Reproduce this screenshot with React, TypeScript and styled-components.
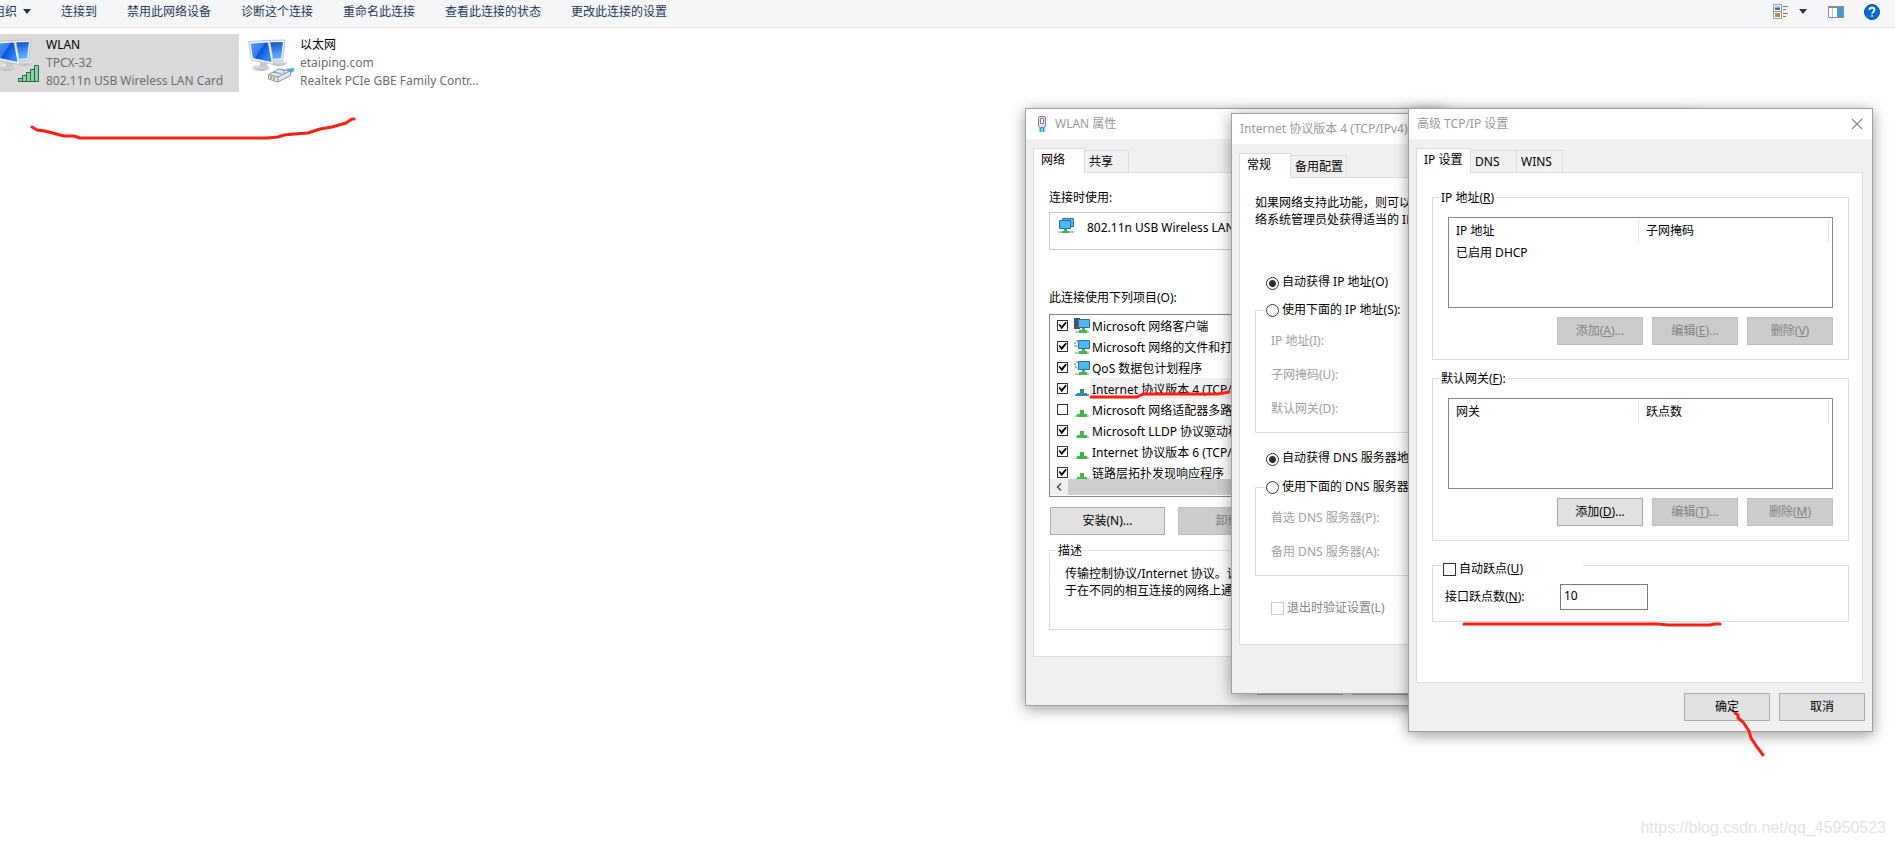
import React from 'react';
import styled, { createGlobalStyle, css } from 'styled-components';

const Global = createGlobalStyle`
  *, *::before, *::after { box-sizing: border-box; }
  body { margin: 0; background: #fff; color: #000; overflow: hidden;
    font: 12px/16px "Noto Sans", "Noto Sans CJK SC", sans-serif; }
  button, input, table { font: inherit; color: inherit; }
`;

const Desktop = styled.main`
  position: relative;
  min-height: 100vh;
  overflow: hidden;
`;

/* ---------- Explorer ---------- */
const Toolbar = styled.header`
  display: flex;
  align-items: center;
  justify-content: space-between;
  height: 28px;
  padding: 0 15px 4px 0;
  background: #f5f6f7;
  border-bottom: 1px solid #e5e6e7;
`;
const Commands = styled.nav`
  display: flex;
  gap: 30px;
  margin-left: -7px;
`;
const Command = styled.button`
  display: flex;
  align-items: center;
  gap: 6px;
  padding: 0;
  border: 0;
  background: none;
  color: #1e395b;
  white-space: nowrap;
`;
const ViewTools = styled.div`
  display: flex;
  align-items: center;
`;
const ToolButton = styled.button<{ $gap?: number }>`
  display: flex;
  padding: 0;
  border: 0;
  background: none;
  margin-left: ${(p) => p.$gap ?? 0}px;
`;
const Connections = styled.section`
  display: flex;
  gap: 1px;
  margin: 6px 0 0 -14px;
`;
const Connection = styled.article<{ $selected?: boolean }>`
  display: flex;
  gap: 4px;
  width: 253px;
  height: 58px;
  padding: 2px 4px 2px 8px;
  background: ${(p) => (p.$selected ? '#d9d9d9' : 'transparent')};
`;
const ConnectionIcon = styled.svg`
  flex: none;
`;
const ConnectionText = styled.div`
  min-width: 0;
  color: #6d6d6d;
  line-height: 18px;
  white-space: nowrap;
`;
const ConnectionName = styled.div`
  color: #000;
`;
const Ellipsis = styled.div`
  overflow: hidden;
  text-overflow: ellipsis;
`;
const Watermark = styled.div`
  position: absolute;
  right: 9px;
  bottom: 8px;
  color: #e2e2e2;
  font: 16px/20px "Liberation Sans", sans-serif;
`;

/* ---------- Dialogs ---------- */
const Dialog = styled.section<{ $right: number; $top: number; $width: number }>`
  position: absolute;
  right: ${(p) => p.$right}px;
  top: ${(p) => p.$top}px;
  width: ${(p) => p.$width}px;
  background: #f0f0f0;
  border: 1px solid #a0a0a0;
  box-shadow: 0 3px 14px rgba(0, 0, 0, 0.4);
  white-space: nowrap;
`;
const TitleBar = styled.header`
  display: flex;
  align-items: center;
  gap: 5px;
  height: 30px;
  padding: 0 9px 0 8px;
  background: #fff;
  color: #999;
`;
const Title = styled.h2`
  margin: 0;
  font: inherit;
  flex: 1;
`;
const CloseButton = styled.button`
  display: flex;
  padding: 0;
  border: 0;
  background: none;
`;
const Tabs = styled.div`
  display: flex;
  align-items: flex-end;
  height: 33px;
  padding-left: 7px;
`;
const Tab = styled.button<{ $width: number; $active?: boolean }>`
  width: ${(p) => p.$width}px;
  height: 22px;
  padding: 0 0 0 4px;
  text-align: left;
  background: #f0f0f0;
  border: 1px solid #dcdcdc;
  border-width: 1px 1px 0 0;
  ${(p) =>
    p.$active &&
    css`
      position: relative;
      z-index: 1;
      height: 25px;
      margin-bottom: -1px;
      padding: 0 0 2px 7px;
      background: #fff;
      border-left-width: 1px;
    `}
`;
const Panel = styled.div<{ $bottom: number }>`
  margin: 0 9px 0 7px;
  padding: 16px 13px ${(p) => p.$bottom}px 15px;
  background: #fff;
  border: 1px solid #dcdcdc;
`;
const Footer = styled.footer`
  display: flex;
  justify-content: flex-end;
  gap: 9px;
  min-height: 48px;
  padding: 10px 7px;
`;
const Button = styled.button<{ $width?: number }>`
  width: ${(p) => p.$width ?? 86}px;
  height: 28px;
  padding: 0;
  background: #e1e1e1;
  border: 1px solid #adadad;
  &:disabled {
    background: #ccc;
    border-color: #bfbfbf;
    color: #838383;
  }
`;
const Group = styled.fieldset<{ $mt?: number }>`
  min-width: 0;
  margin: ${(p) => p.$mt ?? 0}px 0 0;
  padding: 0;
  border: 1px solid #dcdcdc;
`;
const Legend = styled.legend`
  height: 16px;
  margin-left: 6px;
  padding: 0 2px;
  line-height: 18px;
`;
const OptionLegend = styled.legend`
  width: 180px;
  margin-left: 10px;
  padding: 0;
`;
const MetricLegend = styled.legend`
  width: 140px;
  margin-left: 10px;
  padding: 8px 0 0;
`;
const Option = styled.label<{ $mt?: number; $dim?: boolean; $centered?: boolean }>`
  display: flex;
  align-items: ${(p) => (p.$centered ? 'center' : 'flex-end')};
  gap: 3px;
  height: 16px;
  margin-top: ${(p) => p.$mt ?? 0}px;
  color: ${(p) => (p.$dim ? '#838383' : '#000')};
`;
const OptionIndent = styled.div`
  padding-left: 11px;
`;
const ExitIndent = styled.div`
  padding-left: 16px;
`;
const Radio = styled.input.attrs({ type: 'radio' })`
  appearance: none;
  flex: none;
  width: 13px;
  height: 13px;
  margin: 0;
  border: 1px solid #333;
  border-radius: 50%;
  background: #fff;
  &:checked {
    background: radial-gradient(circle, #333 3px, #fff 4px);
  }
`;
const Check = styled.input.attrs({ type: 'checkbox' })<{ $size: number }>`
  appearance: none;
  flex: none;
  width: ${(p) => p.$size}px;
  height: ${(p) => p.$size}px;
  margin: 0;
  border: 1px solid #333;
  background: #fff;
  &:disabled { border-color: #ccc; }
  &:checked::after {
    content: "";
    display: block;
    width: 9px;
    height: 9px;
    background: #000;
    clip-path: polygon(6% 42%, 20% 34%, 40% 56%, 84% 8%, 98% 20%, 42% 92%);
  }
`;

/* WLAN properties */
const AdapterLabel = styled.div`
  line-height: 18px;
`;
const AdapterBox = styled.div`
  display: flex;
  gap: 13px;
  height: 38px;
  margin-top: 5px;
  padding: 5px 8px;
  border: 1px solid #c8c8c8;
  line-height: 20px;
`;
const ItemsLabel = styled.div`
  margin: 40px 0 8px;
`;
const ItemsBox = styled.div`
  height: 183px;
  border: 1px solid #828790;
`;
const ItemRows = styled.div`
  height: 164px;
  overflow: hidden;
`;
const ItemRow = styled.label`
  display: flex;
  align-items: center;
  height: 21px;
  padding-left: 7px;
`;
const ItemIcon = styled.svg`
  flex: none;
  margin-left: 6px;
`;
const ItemName = styled.span<{ $selected?: boolean }>`
  flex: 1;
  height: 21px;
  padding-left: 2px;
  line-height: 23px;
  background: ${(p) => (p.$selected ? '#f0f0f0' : 'transparent')};
`;
const ScrollBar = styled.div`
  display: flex;
  height: 16px;
  background: #cdcdcd;
`;
const ScrollArrow = styled.button`
  display: flex;
  align-items: center;
  justify-content: center;
  width: 18px;
  padding: 0;
  border: 0;
  background: #f0f0f0;
`;
const InstallRow = styled.div`
  display: flex;
  gap: 13px;
  margin: 10px 0 7px 1px;
`;
const Description = styled.p`
  height: 71px;
  margin: 0;
  padding: 7px 15px 0;
  line-height: 17px;
  overflow: hidden;
`;

/* IPv4 */
const Intro = styled.p`
  margin: 0;
  line-height: 17px;
`;
const FieldNames = styled.div`
  display: grid;
  gap: 18px;
  padding: 15px;
  color: #a0a0a0;
`;

/* Advanced */
const ListBox = styled.div`
  height: 91px;
  margin: 12px 15px 9px;
  padding: 1px 3px 0 0;
  border: 1px solid #828790;
`;
const Table = styled.table`
  width: 100%;
  table-layout: fixed;
  border-collapse: separate;
  border-spacing: 0;
  text-align: left;
  th, td { padding: 0 0 0 7px; font-weight: normal; }
  th { height: 24px; border-right: 1px solid #e5e5e5; }
  td { height: 20px; }
`;
const ListButtons = styled.div`
  display: flex;
  justify-content: flex-end;
  gap: 9px;
  padding: 0 15px 14px;
`;
const MetricRow = styled.div`
  display: flex;
  align-items: center;
  padding: 7px 0 11px 12px;
`;
const MetricLabel = styled.label`
  width: 115px;
`;
const MetricInput = styled.input`
  width: 88px;
  height: 26px;
  padding: 0 3px 3px;
  border: 1px solid #7a7a7a;
  background: #fff;
`;

/* Hand-drawn red marks that lie over the windows */
const Mark = styled.svg<{ $left: number; $top: number }>`
  position: absolute;
  z-index: 2;
  left: ${(p) => p.$left}px;
  top: ${(p) => p.$top}px;
  fill: none;
  stroke: #fe1f12;
  stroke-width: 3;
  stroke-linecap: round;
  stroke-linejoin: round;
  pointer-events: none;
`;

const Caret = () => (
  <svg width="8" height="5" viewBox="0 0 8 5"><path d="M0 0h8L4 5z" fill="#1e395b" /></svg>
);

function Monitors({ kind }: { kind: 'wifi' | 'lan' }) {
  return (
    <ConnectionIcon width="48" height="48" viewBox="0 0 48 48">
      <defs>
        <linearGradient id={`front-${kind}`} x1="0" y1="0" x2="1" y2="0.6">
          <stop offset="0" stopColor="#5a9cf5" />
          <stop offset="0.5" stopColor="#2f7df0" />
          <stop offset="0.52" stopColor="#0a50dc" />
          <stop offset="1" stopColor="#2b8cff" />
        </linearGradient>
        <linearGradient id={`back-${kind}`} x1="0" y1="0" x2="0.3" y2="1">
          <stop offset="0" stopColor="#0a46cc" />
          <stop offset="1" stopColor="#56b0ff" />
        </linearGradient>
        <linearGradient id={`base-${kind}`} x1="0" y1="0" x2="0" y2="1">
          <stop offset="0" stopColor="#f4f4f4" />
          <stop offset="1" stopColor="#b4b6b8" />
        </linearGradient>
      </defs>
      <ellipse cx="31" cy="27" rx="8" ry="3" fill={`url(#base-${kind})`} />
      <path d="M15 4.500L37 4l-2.500 20.500L20 25z" fill="#f2f4f6" stroke="#bfc3c8" />
      <path d="M17 6.500L35 6l-2 16.500L21 23z" fill={`url(#back-${kind})`} />
      <ellipse cx="13" cy="31.500" rx="8.500" ry="3.500" fill={`url(#base-${kind})`} />
      <path d="M12 26h7v5h-7z" fill="#c6c9cc" />
      <path d="M.5 5.500l21-1 4.500 24L3.500 24z" fill="#f7f8f9" stroke="#bfc3c8" />
      <path d="M2.500 7.500l17.500-1 3.500 19.500L5 22z" fill={`url(#front-${kind})`} />
      {kind === 'wifi' ? (
        <path
          d="M24.500 42.500h4v3h-4zM28.500 39.500h4v6h-4zM32.500 36.500h4v9h-4zM36.500 33.500h4v12h-4zM40.500 29.500h4v16h-4z"
          fill="#8fd0a4" stroke="#1f6b3c"
        />
      ) : (
        <g>
          <path d="M38 33l8-1v3l-6 4z" fill="#3fb0e6" />
          <path d="M20.500 38.500L31 33l11.500 2v4.500L30 46l-9.500-3z" fill="#e2e9f3" stroke="#8494ac" />
          <path d="M20.500 38.500L30 41v5M30 41l12-6M32 33l4 1.500v4M25 36l9 2" fill="none" stroke="#8494ac" />
          <path d="M23 40v3.500M26 41v3.500" stroke="#a8a040" strokeWidth="1.500" />
        </g>
      )}
    </ConnectionIcon>
  );
}

type ItemKind = 'client' | 'service' | 'protocol';

function NetIcon({ kind, selected }: { kind: ItemKind; selected?: boolean }) {
  if (kind === 'protocol') {
    return (
      <ItemIcon width="16" height="16" viewBox="0 0 16 16">
        <path d="M1 13h14v2H1z" fill={selected ? '#5a93c8' : '#c8ccc8'} />
        <path d="M6 8h4v4h3v3H3v-3h3z" fill={selected ? '#2b8f98' : '#3dbb4a'} />
      </ItemIcon>
    );
  }
  return (
    <ItemIcon width="16" height="16" viewBox="0 0 16 16">
      {kind === 'client' ? (
        <path d="M0 0h6v11H0z" fill="#4a4f55" />
      ) : (
        <circle cx="4" cy="5" r="3" fill="none" stroke="#9aa0a8" strokeWidth="2" strokeDasharray="2 1" />
      )}
      <path d="M4.500 1.500h11v8h-11z" fill="#4cb8f5" stroke="#2c6f9e" />
      <path d="M1 13h14v2H1z" fill="#c0c4c0" />
      <path d="M8 10h3v2h2v3H5v-3h3z" fill="#3dbb4a" />
    </ItemIcon>
  );
}

const items: { name: string; kind: ItemKind; checked: boolean; selected?: boolean }[] = [
  { name: 'Microsoft 网络客户端', kind: 'client', checked: true },
  { name: 'Microsoft 网络的文件和打印', kind: 'service', checked: true },
  { name: 'QoS 数据包计划程序', kind: 'service', checked: true },
  { name: 'Internet 协议版本 4 (TCP/IPv4)', kind: 'protocol', checked: true, selected: true },
  { name: 'Microsoft 网络适配器多路', kind: 'protocol', checked: false },
  { name: 'Microsoft LLDP 协议驱动程序', kind: 'protocol', checked: true },
  { name: 'Internet 协议版本 6 (TCP/IPv6)', kind: 'protocol', checked: true },
  { name: '链路层拓扑发现响应程序', kind: 'protocol', checked: true },
];

const commands = ['连接到', '禁用此网络设备', '诊断这个连接', '重命名此连接', '查看此连接的状态', '更改此连接的设置'];

function Explorer() {
  return (
    <>
      <Toolbar>
        <Commands>
          <Command>组织<Caret /></Command>
          {commands.map((c) => <Command key={c}>{c}</Command>)}
        </Commands>
        <ViewTools>
          <ToolButton aria-label="视图">
            <svg width="16" height="16" viewBox="0 0 16 16">
              <path d="M.5.5h8v7h-8zM.5 7.500h8v7h-8z" fill="#fff" stroke="#9a9a9a" />
              <path d="M2 2h5v4H2z" fill="#8db9ec" /><path d="M2 4h5v2H2z" fill="#3a6ea5" />
              <path d="M2 9h5v4H2z" fill="#7fb24a" /><path d="M4 10h3v3H4z" fill="#d07a3a" />
              <path d="M10 2.500h5M10 5.500h3M10 9.500h5M10 12.500h3" stroke="#777" />
            </svg>
          </ToolButton>
          <ToolButton $gap={10} aria-label="更多视图"><Caret /></ToolButton>
          <ToolButton $gap={21} aria-label="预览窗格">
            <svg width="16" height="12" viewBox="0 0 16 12">
              <path d="M.5.5h15v11H.5z" fill="#fff" stroke="#8a8a8a" />
              <path d="M0 0h16v2H0z" fill="#8a8a8a" />
              <path d="M4.500 2v9" stroke="#c8c8c8" />
              <path d="M9 2h6v9H9z" fill="#3c9be6" />
            </svg>
          </ToolButton>
          <ToolButton $gap={20} aria-label="帮助">
            <svg width="16" height="16" viewBox="0 0 16 16">
              <circle cx="8" cy="8" r="7.500" fill="#0a6cd0" stroke="#0a4f9e" />
              <path d="M5.500 6c0-3.300 5-3.300 5 0 0 1.800-2.400 1.900-2.400 3.800M8.100 11.200v1.600" fill="none" stroke="#fff" strokeWidth="1.700" />
            </svg>
          </ToolButton>
        </ViewTools>
      </Toolbar>
      <Connections>
        <Connection $selected>
          <Monitors kind="wifi" />
          <ConnectionText>
            <ConnectionName>WLAN</ConnectionName>
            <div>TPCX-32</div>
            <Ellipsis>802.11n USB Wireless LAN Card</Ellipsis>
          </ConnectionText>
        </Connection>
        <Connection>
          <Monitors kind="lan" />
          <ConnectionText>
            <ConnectionName>以太网</ConnectionName>
            <div>etaiping.com</div>
            <Ellipsis>Realtek PCIe GBE Family Contr...</Ellipsis>
          </ConnectionText>
        </Connection>
      </Connections>
    </>
  );
}

function WlanDialog() {
  return (
    <Dialog $right={449} $top={108} $width={421} aria-label="WLAN 属性">
      <TitleBar>
        <svg width="16" height="18" viewBox="0 0 16 18">
          <path d="M4.500 2.500q0-1 1-1h5q1 0 1 1v8q0 2-2 2h-3q-2 0-2-2z" fill="#dfe4ec" stroke="#6f7f99" />
          <path d="M6.500 3.500h3v5h-3z" fill="#fff" stroke="#6f7f99" />
          <path d="M6.500 13v4M9.500 13v4" stroke="#1f9bd8" strokeWidth="2" />
        </svg>
        <Title>WLAN 属性</Title>
      </TitleBar>
      <Tabs>
        <Tab $active $width={52}>网络</Tab>
        <Tab $width={44}>共享</Tab>
      </Tabs>
      <Panel $bottom={26}>
        <AdapterLabel>连接时使用:</AdapterLabel>
        <AdapterBox>
          <svg width="16" height="16" viewBox="0 0 16 16">
            <path d="M4.500.5h11v8h-11z" fill="#4cb8f5" stroke="#2c6f9e" />
            <path d="M1.500 2.500h11v8h-11z" fill="#4cb8f5" stroke="#2c6f9e" />
            <path d="M0 13h16v2H0z" fill="#c0c4c0" />
            <path d="M6 11h3v2h2v2H4v-2h2z" fill="#3dbb4a" />
          </svg>
          802.11n USB Wireless LAN Card
        </AdapterBox>
        <ItemsLabel>此连接使用下列项目(O):</ItemsLabel>
        <ItemsBox>
          <ItemRows>
            {items.map((it) => (
              <ItemRow key={it.name}>
                <Check $size={11} defaultChecked={it.checked} />
                <NetIcon kind={it.kind} selected={it.selected} />
                <ItemName $selected={it.selected}>{it.name}</ItemName>
              </ItemRow>
            ))}
          </ItemRows>
          <ScrollBar>
            <ScrollArrow aria-label="向左滚动">
              <svg width="6" height="8" viewBox="0 0 6 8"><path d="M5 .5L1.500 4 5 7.500" fill="none" stroke="#505050" strokeWidth="1.500" /></svg>
            </ScrollArrow>
          </ScrollBar>
        </ItemsBox>
        <InstallRow>
          <Button $width={115}>安装(N)...</Button>
          <Button $width={115} disabled>卸载(U)</Button>
        </InstallRow>
        <Group>
          <Legend>描述</Legend>
          <Description>传输控制协议/Internet 协议。该<br />于在不同的相互连接的网络上通</Description>
        </Group>
      </Panel>
      <Footer>
        <Button>确定</Button>
        <Button>取消</Button>
      </Footer>
      <Mark $left={61} $top={278} width="150" height="14">
        <path d="M4 10H50L56 7H131L142 5" />
      </Mark>
    </Dialog>
  );
}

function Ipv4Dialog() {
  return (
    <Dialog $right={199} $top={113} $width={465} aria-label="Internet 协议版本 4">
      <TitleBar><Title>Internet 协议版本 4 (TCP/IPv4)</Title></TitleBar>
      <Tabs>
        <Tab $active $width={52}>常规</Tab>
        <Tab $width={56}>备用配置</Tab>
      </Tabs>
      <Panel $bottom={28}>
        <Intro>如果网络支持此功能，则可以<br />络系统管理员处获得适当的 IP</Intro>
        <OptionIndent>
          <Option $mt={46}><Radio name="ip" defaultChecked />自动获得 IP 地址(O)</Option>
        </OptionIndent>
        <Group $mt={12}>
          <OptionLegend><Option $centered><Radio name="ip" />使用下面的 IP 地址(S):</Option></OptionLegend>
          <FieldNames><span>IP 地址(I):</span><span>子网掩码(U):</span><span>默认网关(D):</span></FieldNames>
        </Group>
        <OptionIndent>
          <Option $mt={17}><Radio name="dns" defaultChecked />自动获得 DNS 服务器地址(B)</Option>
        </OptionIndent>
        <Group $mt={13}>
          <OptionLegend><Option $centered><Radio name="dns" />使用下面的 DNS 服务器</Option></OptionLegend>
          <FieldNames><span>首选 DNS 服务器(P):</span><span>备用 DNS 服务器(A):</span></FieldNames>
        </Group>
        <ExitIndent>
          <Option $mt={24} $dim $centered><Check $size={13} disabled />退出时验证设置(L)</Option>
        </ExitIndent>
      </Panel>
      <Footer />
    </Dialog>
  );
}

interface AddressGroupProps {
  legend: React.ReactNode;
  columns: [string, string];
  rows: string[];
  keys: [string, string, string];
  canAdd?: boolean;
  mt?: number;
}
function AddressGroup({ legend, columns, rows, keys, canAdd, mt }: AddressGroupProps) {
  return (
    <Group $mt={mt}>
      <Legend>{legend}</Legend>
      <ListBox>
        <Table>
          <thead><tr><th>{columns[0]}</th><th>{columns[1]}</th></tr></thead>
          <tbody>{rows.map((r) => <tr key={r}><td>{r}</td><td /></tr>)}</tbody>
        </Table>
      </ListBox>
      <ListButtons>
        <Button disabled={!canAdd}>添加(<u>{keys[0]}</u>)...</Button>
        <Button disabled>编辑(<u>{keys[1]}</u>)...</Button>
        <Button disabled>删除(<u>{keys[2]}</u>)</Button>
      </ListButtons>
    </Group>
  );
}

function AdvancedDialog() {
  return (
    <Dialog $right={22} $top={108} $width={465} aria-label="高级 TCP/IP 设置">
      <TitleBar>
        <Title>高级 TCP/IP 设置</Title>
        <CloseButton aria-label="关闭">
          <svg width="12" height="12" viewBox="0 0 12 12"><path d="M1 1l10 10M11 1L1 11" stroke="#8a8a8a" strokeWidth="1.200" /></svg>
        </CloseButton>
      </TitleBar>
      <Tabs>
        <Tab $active $width={55}>IP 设置</Tab>
        <Tab $width={46}>DNS</Tab>
        <Tab $width={46}>WINS</Tab>
      </Tabs>
      <Panel $bottom={60}>
        <AddressGroup legend={<>IP 地址(<u>R</u>)</>} columns={['IP 地址', '子网掩码']} rows={['已启用 DHCP']} keys={['A', 'E', 'V']} />
        <AddressGroup mt={10} canAdd legend={<>默认网关(<u>F</u>):</>} columns={['网关', '跃点数']} rows={[]} keys={['D', 'T', 'M']} />
        <Group $mt={12}>
          <MetricLegend><Option $centered><Check $size={13} /><span>自动跃点(<u>U</u>)</span></Option></MetricLegend>
          <MetricRow>
            <MetricLabel htmlFor="metric">接口跃点数(<u>N</u>):</MetricLabel>
            <MetricInput id="metric" defaultValue="10" />
          </MetricRow>
        </Group>
      </Panel>
      <Footer>
        <Button>确定</Button>
        <Button>取消</Button>
      </Footer>
      <Mark $left={49} $top={509} width="270" height="12">
        <path d="M6 6H200L210 7H252L256 6H262" />
      </Mark>
      <Mark $left={321} $top={600} width="40" height="52">
        <path d="M5 4L8 6V9L13 13L19 22L21 29L27 38L33 46" />
      </Mark>
    </Dialog>
  );
}

export default function App() {
  return (
    <>
      <Global />
      <Desktop>
        <Explorer />
        <Mark $left={28} $top={114} width="332" height="30">
          <path d="M4 13L9 16L17 17L36 22H46L52 24H239L250 23L256 21L266 20L280 19L292 15L304 13L318 9L324 5H326" />
        </Mark>
        <WlanDialog />
        <Ipv4Dialog />
        <AdvancedDialog />
        <Watermark>https://blog.csdn.net/qq_45950523</Watermark>
      </Desktop>
    </>
  );
}
